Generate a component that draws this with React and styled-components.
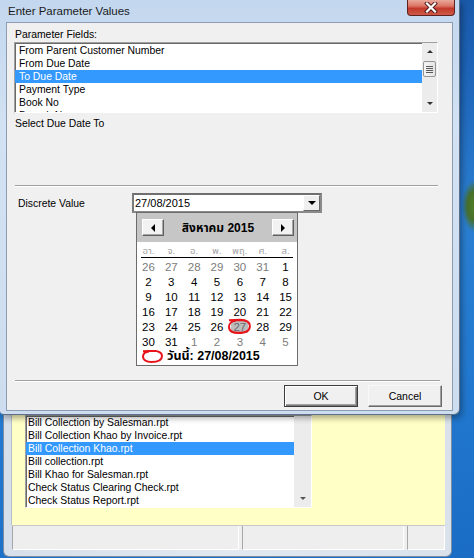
import React from "react";
import styled, { createGlobalStyle } from "styled-components";

const GlobalStyle = createGlobalStyle`
  html, body {
    margin: 0;
    padding: 0;
  }
  body {
    font-family: "Liberation Sans", Arial, "Noto Sans", "DejaVu Sans", sans-serif;
    font-size: 10.4px;
    color: #000;
  }
`;

const Screen = styled.div`
  width: 474px;
  height: 558px;
  overflow: hidden;
  display: flex;
  flex-direction: column;
  background:
    radial-gradient(ellipse 12px 26px at 474px 206px, #4e7d26 0%, #466f2c 55%, rgba(40, 110, 60, 0) 100%),
    linear-gradient(172deg, #174f9c 0%, #1d64b8 22%, #2b7fd2 45%, #2279cf 70%, #1a6cc4 100%);
`;

const TopRow = styled.div`
  display: flex;
  height: 415px;
  flex: none;
  position: relative;
  z-index: 1;
`;

const Dialog = styled.div`
  width: 460px;
  box-sizing: border-box;
  background: linear-gradient(180deg, #c3d7ee 0%, #d2e1f3 30%, #cddcef 100%);
  border-right: 1px solid #5d7089;
  border-bottom: 1px solid #5d7089;
  border-bottom-right-radius: 6px;
  border-bottom-left-radius: 4px;
  padding: 0 6px 3px 6px;
  display: flex;
  flex-direction: column;
  box-shadow: 2px 3px 6px rgba(0, 0, 0, 0.35);
`;

const TitleBar = styled.div`
  height: 22px;
  flex: none;
  display: flex;
  justify-content: space-between;
  align-items: flex-start;
`;

const Title = styled.div`
  padding-left: 2px;
  line-height: 22px;
  font-size: 11.5px;
  color: #1b1b1b;
`;

const CloseButton = styled.div`
  width: 48px;
  height: 16px;
  margin-right: -2px;
  box-sizing: border-box;
  border: 1px solid #5e2320;
  border-top: none;
  border-radius: 0 0 4px 4px;
  background: linear-gradient(180deg, #e9a99b 0%, #dc7565 40%, #c2392b 56%, #cf5a47 100%);
  display: flex;
  align-items: center;
  justify-content: center;
`;

const Client = styled.div`
  flex: 1;
  background: #f0f0f0;
  border: 1px solid #8b9db3;
  display: flex;
  flex-direction: column;
  padding: 0 14px 3px 7px;
`;

const Label = styled.div`
  line-height: 13px;
  height: 13px;
  margin: ${(p) => p.$margin || "0"};
  white-space: nowrap;
`;

const ListBox = styled.div`
  display: flex;
  flex: none;
  width: ${(p) => p.$width || "auto"};
  height: ${(p) => p.$height}px;
  margin: ${(p) => p.$margin || "0"};
  box-sizing: border-box;
  background: #fff;
  border-top: 1px solid #a0a0a0;
  border-left: 1px solid #a0a0a0;
  border-right: 1px solid #fff;
  border-bottom: 1px solid #fff;
  box-shadow: inset 1px 1px 0 #696969;
  overflow: hidden;
`;

const Rows = styled.div`
  flex: 1;
  padding-top: ${(p) => p.$offset}px;
  overflow: hidden;
`;

const Row = styled.div`
  height: 13px;
  line-height: 13px;
  padding-left: ${(p) => p.$indent}px;
  white-space: nowrap;
  background: ${(p) => (p.$selected ? "#3399ff" : "transparent")};
  color: ${(p) => (p.$selected ? "#fff" : "#000")};
`;

const ScrollBar = styled.div`
  width: ${(p) => p.$width}px;
  flex: none;
  background: #ececec;
  display: flex;
  flex-direction: column;
  align-items: center;
`;

const ArrowBox = styled.div`
  height: 17px;
  width: 100%;
  flex: none;
  display: flex;
  align-items: center;
  justify-content: center;
  margin-top: ${(p) => (p.$push ? "auto" : "0")};
`;

const Triangle = styled.span`
  width: 0;
  height: 0;
  border-left: ${(p) => p.$size}px solid transparent;
  border-right: ${(p) => p.$size}px solid transparent;
  ${(p) =>
    p.$up
      ? `border-bottom: ${p.$size}px solid ${p.$color || "#303030"};`
      : `border-top: ${p.$size}px solid ${p.$color || "#303030"};`}
`;

const SideTriangle = styled.span`
  width: 0;
  height: 0;
  border-top: 4px solid transparent;
  border-bottom: 4px solid transparent;
  ${(p) => (p.$left ? "border-right: 4px solid #000;" : "border-left: 4px solid #000;")}
`;

const Thumb = styled.div`
  width: 13px;
  height: 16px;
  margin-top: 1px;
  box-sizing: border-box;
  border: 1px solid #959595;
  border-radius: 2px;
  background: linear-gradient(90deg, #f6f6f6 0%, #e4e4e4 100%);
  display: flex;
  align-items: center;
  justify-content: center;
`;

const Grip = styled.span`
  width: 7px;
  height: 7px;
  background: repeating-linear-gradient(180deg, #5a5a5a 0 1px, transparent 1px 2px);
`;

const Separator = styled.div`
  flex: none;
  height: 0;
  border-top: 1px solid #a0a0a0;
  border-bottom: 1px solid #fff;
  margin: ${(p) => p.$margin || "0"};
`;

const ParamRow = styled.div`
  display: flex;
  align-items: center;
  height: 20px;
  margin-top: 6px;
  padding-left: 4px;
`;

const ParamLabel = styled.div`
  width: 114px;
  flex: none;
`;

const Combo = styled.div`
  position: relative;
  width: 190px;
  height: 20px;
  box-sizing: border-box;
  border: 2px solid #8a8a8a;
  border-top-color: #6f6f6f;
  border-left-color: #7a7a7a;
  background: #fff;
  display: flex;
  align-items: center;
`;

const ComboText = styled.div`
  flex: 1;
  padding-left: 1px;
  font-size: 11px;
`;

const DropButton = styled.div`
  width: 17px;
  height: 16px;
  box-sizing: border-box;
  border: 1px solid;
  border-color: #fff #6a6a6a #6a6a6a #fff;
  background: #efefef;
  display: flex;
  align-items: center;
  justify-content: center;
`;

const CalendarPopup = styled.div`
  position: absolute;
  top: 17px;
  left: 2px;
  width: 162px;
  height: 154px;
  box-sizing: border-box;
  border: 1px solid #6c6c6c;
  background: #fff;
  display: flex;
  flex-direction: column;
  font-family: "Liberation Sans", "Noto Sans Thai", "Noto Sans", "DejaVu Sans", sans-serif;
`;

const CalHeader = styled.div`
  height: 29px;
  flex: none;
  background: #c6c6c6;
  display: flex;
  align-items: center;
  justify-content: space-between;
  padding: 0 3px 0 5px;
`;

const NavButton = styled.div`
  width: 22px;
  height: 17px;
  box-sizing: border-box;
  border: 1px solid;
  border-color: #fff #5e5e5e #5e5e5e #fff;
  box-shadow: inset -1px -1px 0 #a8a8a8;
  background: #f2f2f2;
  display: flex;
  align-items: center;
  justify-content: center;
`;

const MonthTitle = styled.div`
  font-weight: bold;
  font-size: 12px;
`;

const CalGrid = styled.div`
  display: grid;
  grid-template-columns: repeat(7, 1fr);
  grid-auto-rows: ${(p) => p.$rowHeight}px;
  margin-top: ${(p) => p.$top}px;
  flex: none;
`;

const DayName = styled.div`
  text-align: center;
  font-size: 9.5px;
  line-height: 13px;
  color: #a2a2a2;
`;

const Rule = styled.div`
  height: 1px;
  background: #000;
  margin: 0 4px;
  flex: none;
`;

const DayCell = styled.div`
  position: relative;
  display: flex;
  align-items: center;
  justify-content: center;
  font-size: 11.5px;
  color: ${(p) => (p.$muted ? "#7c7c7c" : "#000")};
`;

const SelectedMark = styled.span`
  background: #bdbdbd;
  color: #6a6a6a;
  padding: 0 2px;
  line-height: 12px;
`;

const TodayRing = styled.svg`
  position: absolute;
  left: 0;
  top: 0;
  width: 100%;
  height: 100%;
  overflow: visible;
  pointer-events: none;
`;

const CalFooter = styled.div`
  height: 15px;
  flex: none;
  display: flex;
  align-items: center;
  padding-left: 5px;
  gap: 4px;
  font-weight: bold;
  font-size: 12.5px;
`;

const BottomArea = styled.div`
  margin-top: auto;
  display: flex;
  flex-direction: column;
`;

const ButtonRow = styled.div`
  display: flex;
  justify-content: flex-end;
  gap: 10px;
  margin: 3px -4px 0 0;
`;

const PushButton = styled.div`
  width: 74px;
  height: 22px;
  box-sizing: border-box;
  display: flex;
  align-items: center;
  justify-content: center;
  background: #f0f0f0;
  font-size: 10.5px;
  border: 1px solid;
  border-color: ${(p) => (p.$default ? "#3c3c3c" : "#f8f8f8 #6a6a6a #6a6a6a #f8f8f8")};
  box-shadow: ${(p) =>
    p.$default
      ? "inset 1px 1px 0 #fff, inset -1px -1px 0 #7a7a7a, inset -2px -2px 0 #a0a0a0"
      : "inset -1px -1px 0 #a0a0a0"};
`;

const BackWindow = styled.div`
  margin-left: 3px;
  width: 449px;
  height: 142px;
  flex: none;
  box-sizing: border-box;
  background: linear-gradient(90deg, #d7dfea 0%, #e2e8f0 50%, #d9e1eb 100%);
  border: 1px solid #7d8ea3;
  border-top: none;
  border-radius: 0 0 6px 6px;
  padding: 0 6px 6px 8px;
  display: flex;
  flex-direction: column;
`;

const YellowPane = styled.div`
  height: 110px;
  flex: none;
  background: #ffffc6;
  padding-left: 13px;
  border-left: 1px solid #b9bfc8;
  margin-left: -1px;
`;

const StatusBar = styled.div`
  flex: 1;
  display: flex;
  gap: 3px;
  background: #eeeeee;
  border-top: 1px solid #c8c8c8;
`;

const StatusPane = styled.div`
  width: ${(p) => p.$width}px;
  flex: ${(p) => (p.$grow ? 1 : "none")};
  box-sizing: border-box;
  border: 1px solid #a7a7a7;
  border-top: none;
  border-right-color: #fff;
  border-bottom-color: #fff;
`;

const paramFields = [
  "From Parent Customer Number",
  "From Due Date",
  "To Due Date",
  "Payment Type",
  "Book No",
  "Branch Name",
];

const reports = [
  "Bill Collection by Salesman.rpt",
  "Bill Collection Khao by Invoice.rpt",
  "Bill Collection Khao.rpt",
  "Bill collection.rpt",
  "Bill Khao for Salesman.rpt",
  "Check Status Clearing Check.rpt",
  "Check Status Report.rpt",
];

const dayNames = ["อา.", "จ.", "อ.", "พ.", "พฤ.", "ศ.", "ส."];

const buildDays = () => {
  const cells = [];
  [26, 27, 28, 29, 30, 31].forEach((n) => cells.push({ n, muted: true }));
  for (let n = 1; n <= 31; n++) cells.push({ n, muted: false, today: n === 27 });
  [1, 2, 3, 4, 5].forEach((n) => cells.push({ n, muted: true }));
  return cells;
};

// hand-drawn looking "today" circle used by the month calendar
const RingPath = ({ w, h }) => (
  <path
    d={`M1 1.2 L${w * 0.55} 0.8 C${w - 1} 1 ${w} ${h * 0.3} ${w} ${h * 0.5} C${w} ${h - 1} ${w * 0.7} ${h} ${w * 0.48} ${h} C${w * 0.2} ${h} 1 ${h - 1.5} 1 ${h * 0.55} C1 ${h * 0.3} ${w * 0.2} ${h * 0.15} ${w * 0.35} ${h * 0.12}`}
    fill="none"
    stroke="#e8141b"
    strokeWidth="2"
  />
);

const CloseGlyph = () => (
  <svg width="14" height="11" viewBox="0 0 14 11">
    <path d="M3 1.5 L11 9.5 M11 1.5 L3 9.5" stroke="#4a1a18" strokeWidth="4" strokeLinecap="square" />
    <path d="M3 1.5 L11 9.5 M11 1.5 L3 9.5" stroke="#fff" strokeWidth="2.2" strokeLinecap="square" />
  </svg>
);

const App = () => {
  const days = buildDays();
  return (
    <Screen>
      <GlobalStyle />
      <TopRow>
        <Dialog>
          <TitleBar>
            <Title>Enter Parameter Values</Title>
            <CloseButton>
              <CloseGlyph />
            </CloseButton>
          </TitleBar>
          <Client>
            <Label $margin="5px 0 0 1px">Parameter Fields:</Label>
            <ListBox $height={71} $margin="1px 0 0 0">
              <Rows $offset={1}>
                {paramFields.map((f) => (
                  <Row key={f} $indent={4} $selected={f === "To Due Date"}>
                    {f}
                  </Row>
                ))}
              </Rows>
              <ScrollBar $width={15}>
                <ArrowBox>
                  <Triangle $up $size={3} />
                </ArrowBox>
                <Thumb>
                  <Grip />
                </Thumb>
                <ArrowBox $push>
                  <Triangle $size={3} />
                </ArrowBox>
              </ScrollBar>
            </ListBox>
            <Label $margin="4px 0 0 1px">Select Due Date To</Label>
            <Separator $margin="55px 0 0 1px" />
            <ParamRow>
              <ParamLabel>Discrete Value</ParamLabel>
              <Combo>
                <ComboText>27/08/2015</ComboText>
                <DropButton>
                  <Triangle $size={4} $color="#000" />
                </DropButton>
                <CalendarPopup>
                  <CalHeader>
                    <NavButton>
                      <SideTriangle $left />
                    </NavButton>
                    <MonthTitle>สิงหาคม 2015</MonthTitle>
                    <NavButton>
                      <SideTriangle />
                    </NavButton>
                  </CalHeader>
                  <CalGrid $rowHeight={13} $top={2}>
                    {dayNames.map((d) => (
                      <DayName key={d}>{d}</DayName>
                    ))}
                  </CalGrid>
                  <Rule />
                  <CalGrid $rowHeight={15} $top={1}>
                    {days.map((d, i) => (
                      <DayCell key={i} $muted={d.muted}>
                        {d.today ? <SelectedMark>{d.n}</SelectedMark> : d.n}
                        {d.today && (
                          <TodayRing viewBox="0 0 23 14" preserveAspectRatio="none">
                            <RingPath w={22} h={13} />
                          </TodayRing>
                        )}
                      </DayCell>
                    ))}
                  </CalGrid>
                  <CalFooter>
                    <svg width="21" height="13" viewBox="0 0 21 13">
                      <RingPath w={20} h={12} />
                    </svg>
                    <span>วันนี้: 27/08/2015</span>
                  </CalFooter>
                </CalendarPopup>
              </Combo>
            </ParamRow>
            <BottomArea>
              <Separator $margin="0 -2px 0 1px" />
              <ButtonRow>
                <PushButton $default>OK</PushButton>
                <PushButton>Cancel</PushButton>
              </ButtonRow>
            </BottomArea>
          </Client>
        </Dialog>
      </TopRow>
      <BackWindow>
        <YellowPane>
          <ListBox $height={93} $width="287px">
            <Rows $offset={0}>
              {reports.map((r) => (
                <Row key={r} $indent={2} $selected={r === "Bill Collection Khao.rpt"}>
                  {r}
                </Row>
              ))}
            </Rows>
            <ScrollBar $width={17}>
              <ArrowBox $push>
                <Triangle $size={3} $color="#555" />
              </ArrowBox>
            </ScrollBar>
          </ListBox>
        </YellowPane>
        <StatusBar>
          <StatusPane $width={227} />
          <StatusPane $width={162} />
          <StatusPane $grow />
        </StatusBar>
      </BackWindow>
    </Screen>
  );
};

export default App;
